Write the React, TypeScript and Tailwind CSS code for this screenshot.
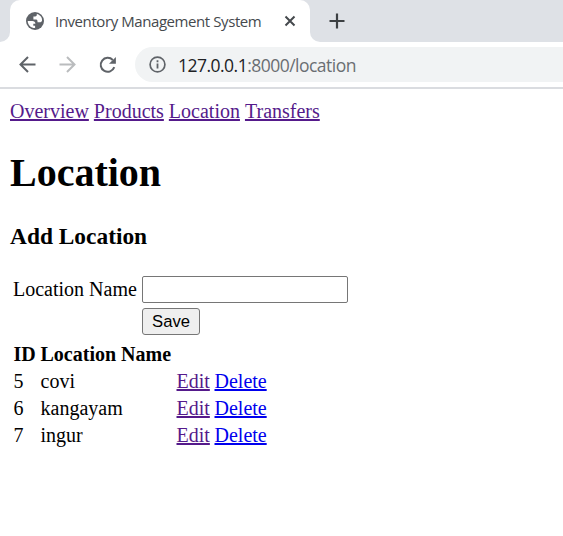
import React from "react";

const rows = [
  { id: 5, name: "covi" },
  { id: 6, name: "kangayam" },
  { id: 7, name: "ingur" },
];

const links = ["Overview", "Products", "Location", "Transfers"];

function TabStrip() {
  return (
    <div className="flex h-[42px] bg-[#dee1e6]">
      <div className="flex w-[10px] items-end bg-white">
        <div className="h-full w-full rounded-br-[10px] bg-[#dee1e6]" />
      </div>
      <div className="flex bg-[#dee1e6]">
        <div className="flex h-[42px] w-[300px] items-center rounded-t-[10px] bg-white pl-[15px]">
          <svg className="size-5 shrink-0" viewBox="0 0 20 20">
            <circle cx="10" cy="10" r="9" fill="#5f6368" />
            <path
              d="M2.7 10h4.6c1.9 0 3 .9 3.1 2.7H8.300v2.100h1.800v2.300C6 17.200 2.800 14 2.700 10Z"
              fill="#fff"
            />
            <path
              d="M11.800 2.900v.9c0 .9-.7 1.600-1.600 1.600H8.400v3.100h2.400c1 0 1.700.7 1.700 1.600v1.200h2.300c.9 0 1.600-.5 2.200-1.300C17.600 6.500 15.200 3.600 11.800 2.900Z"
              fill="#fff"
            />
          </svg>
          <span className="ml-[10px] w-[207px] whitespace-nowrap font-['Open_Sans',sans-serif] text-[15px] leading-5 tracking-[-0.42px] text-[#45494d]">
            Inventory Management System
          </span>
          <svg className="ml-[22px] size-3 shrink-0" viewBox="0 0 12 12" fill="none" stroke="#45494d" strokeWidth="2">
            <path d="m1.5 1.5 9 9m0-9-9 9" />
          </svg>
        </div>
      </div>
      <div className="w-[10px] bg-white">
        <div className="h-full w-full rounded-bl-[10px] bg-[#dee1e6]" />
      </div>
      <svg className="ml-[9px] mt-[13px] size-4" viewBox="0 0 16 16" fill="none" stroke="#3c4043" strokeWidth="2.2">
        <path d="M8 .5v15M.5 8h15" />
      </svg>
    </div>
  );
}

function Toolbar() {
  return (
    <div className="flex h-[47px] items-start border-b-2 border-[#dadce0] pt-[5px]">
      <svg className="ml-[19px] mt-[9px] size-[17px]" viewBox="0 0 17 17" fill="none" stroke="#5f6368" strokeWidth="2">
        <path d="M16.5 8.5H2M9 1 1.5 8.5 9 16" />
      </svg>
      <svg className="ml-[23px] mt-[9px] size-[17px]" viewBox="0 0 17 17" fill="none" stroke="#babcbe" strokeWidth="2">
        <path d="M.5 8.5H15M8 1l7.5 7.5L8 16" />
      </svg>
      <svg className="ml-[23px] mt-[9px] size-[18px]" viewBox="0 0 18 18" fill="none">
        <path d="M15.3 11.2A7 7 0 1 1 13.8 4" stroke="#5f6368" strokeWidth="2" />
        <path d="M16.900.9v6.900H10Z" fill="#5f6368" />
      </svg>
      <div className="ml-[18px] flex h-[35px] flex-1 items-center rounded-l-full bg-[#f1f3f4] pl-[14px]">
        <svg className="size-[17px] shrink-0" viewBox="0 0 17 17" fill="none">
          <circle cx="8.5" cy="8.5" r="7.4" stroke="#5f6368" strokeWidth="1.7" />
          <path d="M8.5 7.5v5M8.5 4.3v1.9" stroke="#5f6368" strokeWidth="1.8" />
        </svg>
        <span className="ml-[12px] whitespace-nowrap font-['Open_Sans',sans-serif] text-[17.5px] leading-6 tracking-[-0.52px] text-[#6a6e72]">
          <span className="text-[#202124]">127.0.0.1</span>:8000/location
        </span>
      </div>
    </div>
  );
}

export default function App() {
  return (
    <div className="h-[536px] w-[563px] overflow-hidden bg-white">
      <TabStrip />
      <Toolbar />
      <main className="px-[10px] pt-[11px] font-['Liberation_Serif',serif] text-[20px] leading-[23px] text-black">
        <nav className="flex gap-[5px]">
          {links.map((l) => (
            <a key={l} href="#" className="text-[#551a8b] underline">
              {l}
            </a>
          ))}
        </nav>
        <h1 className="mt-[27px] text-[40px] font-bold leading-[46px]">Location</h1>
        <h3 className="mt-[27px] text-[23.4px] font-bold leading-[27px]">Add Location</h3>
        <form className="mt-[26px] grid grid-cols-[124px_206px] gap-x-[5px] gap-y-[5px] pl-[3px]">
          <label className="leading-[27px]">Location Name</label>
          <input className="h-[27px] w-[206px] rounded-[2px] border border-[#767676] bg-white" />
          <button
            type="button"
            className="col-start-2 h-[27px] w-[58px] rounded-[3px] border border-[#767676] bg-[#efefef] font-['Liberation_Sans',sans-serif] text-[16.67px] leading-[25px]"
          >
            Save
          </button>
        </form>
        <table className="ml-[3.5px] mt-[6px] w-[256px] table-fixed border-collapse text-left leading-[27px]">
          <colgroup>
            <col className="w-[27px]" />
            <col className="w-[136px]" />
            <col className="w-[38px]" />
            <col className="w-[55px]" />
          </colgroup>
          <thead>
            <tr>
              <th className="p-0">ID</th>
              <th className="whitespace-nowrap p-0">Location Name</th>
            </tr>
          </thead>
          <tbody>
            {rows.map((r) => (
              <tr key={r.id}>
                <td className="p-0">{r.id}</td>
                <td className="p-0">{r.name}</td>
                <td className="p-0">
                  <a href="#" className="text-[#551a8b] underline">Edit</a>
                </td>
                <td className="p-0">
                  <a href="#" className="text-[#0000ee] underline">Delete</a>
                </td>
              </tr>
            ))}
          </tbody>
        </table>
      </main>
    </div>
  );
}
